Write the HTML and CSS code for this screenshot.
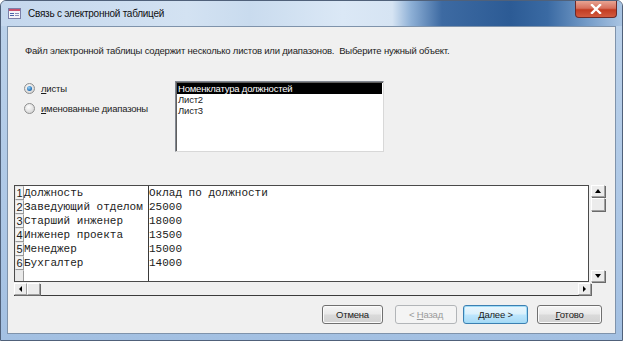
FILE: index.html
```html
<!DOCTYPE html>
<html lang="ru">
<head>
    <meta charset="UTF-8">
    <title>Связь с электронной таблицей</title>
    <link rel="stylesheet" href="styles.css">
</head>
<body>

    <div class="window">
        <div class="titlebar">
            <svg class="app-icon" width="13" height="11" viewBox="0 0 13 11">
                <rect x="0.5" y="0.5" width="12" height="10" fill="#f4f4f8" stroke="#7b7fa8"/>
                <rect x="1" y="1" width="11" height="2" fill="#c8506e"/>
                <rect x="2" y="5" width="4" height="1" fill="#4a62a8"/>
                <rect x="2" y="7" width="4" height="1" fill="#4a62a8"/>
                <rect x="7" y="5" width="4" height="1" fill="#8a8fb8"/>
                <rect x="7" y="7" width="4" height="1" fill="#8a8fb8"/>
            </svg>
            <span class="title">Связь с электронной таблицей</span>
            <div class="close-btn">
                <svg width="12" height="10" viewBox="0 0 12 10">
                    <path d="M2 1 L10 9 M10 1 L2 9" stroke="#fff" stroke-width="2.4" stroke-linecap="square"/>
                </svg>
            </div>
        </div>

        <div class="client">
            <p class="intro">Файл электронной таблицы содержит несколько листов или диапазонов.&nbsp; Выберите нужный объект.</p>

            <div class="choice">
                <div class="radios">
                    <label class="radio checked"><span class="dot"></span><span><u>л</u>исты</span></label>
                    <label class="radio"><span class="dot"></span><span><u>и</u>менованные диапазоны</span></label>
                </div>
                <ul class="listbox">
                    <li class="selected">Номенклатура должностей</li>
                    <li>Лист2</li>
                    <li>Лист3</li>
                </ul>
            </div>

            <div class="preview">
                <div class="sheet">
                    <div class="row"><span class="num">1</span><span class="c1">Должность</span><span class="c2">Оклад по должности</span></div>
                    <div class="row"><span class="num">2</span><span class="c1">Заведующий отделом</span><span class="c2">25000</span></div>
                    <div class="row"><span class="num">3</span><span class="c1">Старший инженер</span><span class="c2">18000</span></div>
                    <div class="row"><span class="num">4</span><span class="c1">Инженер проекта</span><span class="c2">13500</span></div>
                    <div class="row"><span class="num">5</span><span class="c1">Менеджер</span><span class="c2">15000</span></div>
                    <div class="row"><span class="num">6</span><span class="c1">Бухгалтер</span><span class="c2">14000</span></div>
                    <div class="row"><span class="num empty"></span><span class="c1"></span><span class="c2"></span></div>
                </div>
                <div class="vscroll">
                    <span class="sb-btn"><i class="arrow up"></i></span>
                    <span class="sb-btn thumb"></span>
                    <span class="sb-track"></span>
                    <span class="sb-btn"><i class="arrow down"></i></span>
                </div>
                <div class="hscroll">
                    <span class="sb-btn"><i class="arrow left"></i></span>
                    <span class="sb-btn thumb"></span>
                    <span class="sb-track"></span>
                    <span class="sb-btn"><i class="arrow right"></i></span>
                </div>
            </div>

            <div class="buttons">
                <button class="btn cancel">Отмена</button>
                <button class="btn back" disabled>&lt; <u>Н</u>азад</button>
                <button class="btn next default"><u>Д</u>алее &gt;</button>
                <button class="btn finish"><u>Г</u>отово</button>
            </div>
        </div>
    </div>

</body>
</html>
```

FILE: styles.css
```css
body {
    margin: 0;
    width: 623px;
    height: 341px;
    overflow: hidden;
    font-family: 'Liberation Sans', Arial, sans-serif;
    font-size: 9.5px;
    letter-spacing: -0.2px;
    color: #1b1b1b;
    background: #ffffff;
}
.window {
    width: 623px;
    height: 341px;
    box-sizing: border-box;
    display: flex;
    flex-direction: column;
    border: 1px solid #50617a;
    border-radius: 6px 6px 0 0;
    background: linear-gradient(to bottom, #bcd2ea, #aec8e6 60%, #a3c0e2);
    overflow: hidden;
}

/* title bar */
.titlebar {
    height: 25px;
    flex: none;
    display: flex;
    align-items: center;
    padding-left: 7px;
    background: linear-gradient(to right, #c4d7ed 0%, #d3e2f2 30%, #c9dbee 40%, #dbe8f6 55%, #d6e4f3 63%, #8eb0d6 66%, #3d6aa2 71%, #2c5b95 82%, #3a6aa3 88%, #7aa0cb 95%, #a9c4e2 100%);
}
.app-icon {
    flex: none;
}
.title {
    margin-left: 7px;
    font-size: 10px;
    letter-spacing: -0.25px;
    color: #101010;
}
.close-btn {
    margin-left: auto;
    margin-right: 5px;
    align-self: flex-start;
    width: 40px;
    height: 16px;
    display: flex;
    align-items: center;
    justify-content: center;
    border: 1px solid #6b2a2a;
    border-top: none;
    border-radius: 0 0 4px 4px;
    background: linear-gradient(to bottom, #e8a493 0%, #d7705d 45%, #c23c22 55%, #d25a3f 100%);
}

/* client area */
.client {
    flex: 1;
    margin: 0 6px 6px 6px;
    border: 1px solid #7f93ab;
    background: #f0f0f0;
    display: flex;
    flex-direction: column;
}
.intro {
    margin: 17px 0 0 17px;
    line-height: 13px;
}

.choice {
    display: flex;
    margin-top: 24px;
    margin-left: 16px;
}
.radios {
    width: 151px;
    display: flex;
    flex-direction: column;
    gap: 7px;
    padding-top: 1px;
}
.radio {
    display: flex;
    align-items: center;
    gap: 6px;
    height: 13px;
}
.radio .dot {
    width: 11px;
    height: 11px;
    box-sizing: border-box;
    border-radius: 50%;
    border: 1px solid #8e8f8f;
    background: radial-gradient(circle at 40% 35%, #fdfdfd, #dadada 70%, #c9c9c9);
    display: flex;
    align-items: center;
    justify-content: center;
}
.radio.checked .dot::after {
    content: "";
    width: 5px;
    height: 5px;
    border-radius: 50%;
    background: radial-gradient(circle at 40% 35%, #9fd4f5, #2b79be 60%, #1a4f8c);
}

.listbox {
    list-style: none;
    margin: 0;
    padding: 1px;
    width: 209px;
    height: 71px;
    box-sizing: border-box;
    border: 1px solid #828790;
    border-right-color: #d8d8d8;
    border-bottom-color: #d8d8d8;
    background: #ffffff;
    box-shadow: inset 1px 1px 0 #5f5f5f;
}
.listbox li {
    height: 11px;
    line-height: 11px;
    padding-left: 1px;
}
.listbox li.selected {
    background: #000000;
    color: #ffffff;
}

/* sheet preview */
.preview {
    display: grid;
    grid-template-columns: 575px 14px;
    grid-template-rows: 97px 13px;
    column-gap: 2px;
    row-gap: 1px;
    margin: 33px 0 0 6px;
}
.sheet {
    border: 1px solid #4a4a4a;
    background: #ffffff;
    overflow: hidden;
    font-family: 'Liberation Mono', 'Courier New', monospace;
    font-size: 11px;
    letter-spacing: 0;
    color: #1b1b1b;
}
.row {
    display: flex;
    height: 14px;
    line-height: 14px;
}
.num {
    width: 9px;
    box-sizing: border-box;
    border: 1px solid #9a9a9a;
    border-top-color: #e6e6e6;
    border-left-color: #e6e6e6;
    background: #f4f4f4;
    font-family: 'Liberation Sans', Arial, sans-serif;
    font-size: 11px;
    line-height: 12px;
    text-align: center;
}
.num.empty {
    background: #e9e9e9;
}
.c1 {
    width: 124px;
    border-right: 1px solid #3a3a3a;
    white-space: pre;
}
.c2 {
    flex: 1;
    white-space: pre;
}

.vscroll, .hscroll {
    display: flex;
}
.vscroll {
    flex-direction: column;
}
.hscroll {
    border-bottom: 1px solid #3c3c3c;
    margin-right: -2px;
}
.sb-btn {
    flex: none;
    width: 14px;
    height: 12px;
    box-sizing: border-box;
    border: 1px solid #a0a0a0;
    border-top-color: #ffffff;
    border-left-color: #ffffff;
    box-shadow: 1px 1px 0 #6a6a6a;
    background: #ececec;
    display: flex;
    align-items: center;
    justify-content: center;
}
.hscroll .sb-btn {
    width: 13px;
    height: 12px;
}
.vscroll .thumb {
    height: 13px;
    margin-top: 1px;
}
.sb-track {
    flex: 1;
}
.arrow {
    width: 0;
    height: 0;
    border: 3px solid transparent;
}
.arrow.up {
    border-bottom: 4px solid #000;
    border-top-width: 0;
    margin-top: -1px;
}
.arrow.down {
    border-top: 4px solid #000;
    border-bottom-width: 0;
}
.arrow.left {
    border-right: 3px solid #000;
    border-left-width: 0;
}
.arrow.right {
    border-left: 3px solid #000;
    border-right-width: 0;
}

/* buttons */
.buttons {
    display: flex;
    justify-content: flex-end;
    margin-top: 9px;
    margin-right: 13px;
}
.btn {
    height: 19px;
    padding: 0;
    font-family: 'Liberation Sans', Arial, sans-serif;
    font-size: 9.5px;
    letter-spacing: -0.2px;
    color: #1b1b1b;
    border: 1px solid #707070;
    border-radius: 3px;
    background: linear-gradient(to bottom, #f6f6f6 0%, #e9e9e9 48%, #dadada 52%, #d2d2d2 100%);
    box-shadow: inset 0 0 0 1px #fbfbfb;
}
.cancel {
    width: 61px;
}
.back {
    width: 62px;
    margin-left: 12px;
    color: #9a9a9a;
    border-color: #b2b5b8;
    background: #f4f4f4;
    box-shadow: none;
}
.next {
    width: 65px;
    margin-left: 6px;
}
.finish {
    width: 65px;
    margin-left: 9px;
}
.default {
    border-color: #3c7fb1;
    background: linear-gradient(to bottom, #eaf6fd 0%, #d9f0fc 48%, #bee6fd 52%, #a7d9f5 100%);
    box-shadow: inset 0 0 0 1px #9fdcf8;
}
```
